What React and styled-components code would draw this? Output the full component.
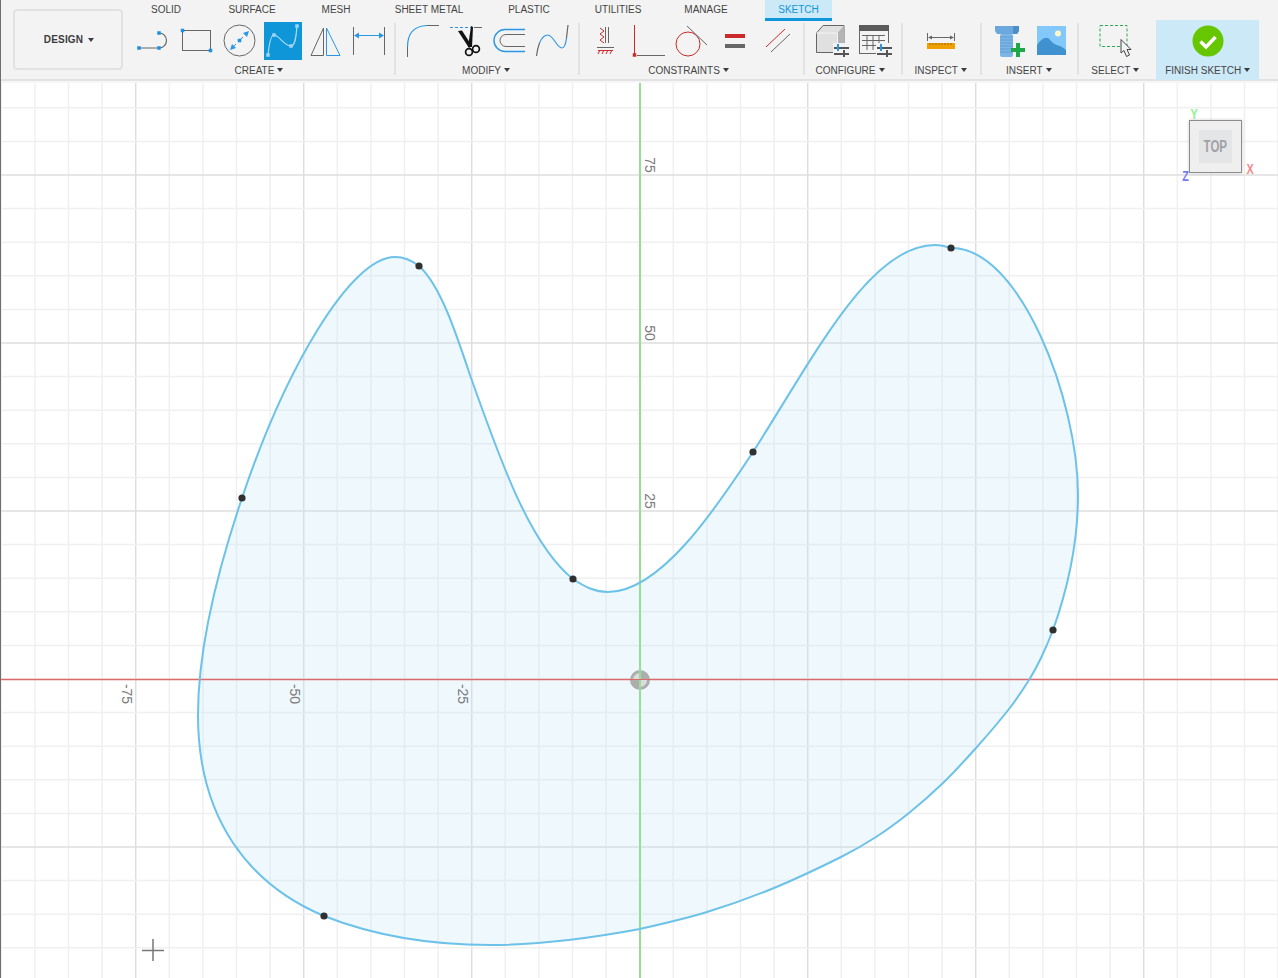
import React from "react";
import styled, { createGlobalStyle } from "styled-components";

const Global = createGlobalStyle`
  html, body { margin: 0; padding: 0; background: #fff; }
  body { font-family: "Liberation Sans", Arial, sans-serif; }
  * { box-sizing: border-box; }
`;

const Page = styled.div`
  position: relative;
  width: 1278px;
  height: 978px;
  overflow: hidden;
  background: #fff;
  &::after {
    content: "";
    position: absolute;
    left: 0;
    top: 0;
    bottom: 0;
    width: 1px;
    background: #6e6e6e;
  }
`;

const Toolbar = styled.header`
  display: flex;
  height: 81px;
  padding-left: 13px;
  background: #f3f3f3;
  border-bottom: 2px solid #e2e2e2;
`;

const DesignButton = styled.div`
  flex: none;
  display: flex;
  align-items: center;
  justify-content: center;
  gap: 5px;
  width: 110px;
  height: 61px;
  margin-top: 9px;
  margin-right: 12px;
  padding-left: 2px;
  border: 2px solid #e2e2e2;
  border-radius: 4px;
  font-size: 10px;
  font-weight: 700;
  letter-spacing: 0.2px;
  color: #3c3c3c;
`;

const Caret = styled.span`
  display: inline-block;
  width: 0;
  height: 0;
  margin-left: ${(p) => p.$gap ?? 3}px;
  vertical-align: 2px;
  border-left: 3px solid transparent;
  border-right: 3px solid transparent;
  border-top: 4px solid #3c3c3c;
`;

const Main = styled.div`
  display: flex;
  flex-direction: column;
  flex: 1;
  min-width: 0;
`;

const Tabs = styled.nav`
  display: flex;
  height: 20px;
  padding-left: 3px;
`;

const Tab = styled.div`
  flex: none;
  width: ${(p) => p.$w}px;
  height: 21px;
  display: flex;
  align-items: center;
  justify-content: center;
  white-space: nowrap;
  font-size: 10px;
  color: ${(p) => (p.$active ? "#0f96d8" : "#444")};
  background: ${(p) => (p.$active ? "#cce9f7" : "transparent")};
  border-bottom: 3px solid ${(p) => (p.$active ? "#0f96d8" : "transparent")};
  margin-left: ${(p) => p.$ml ?? 0}px;
`;

const Groups = styled.div`
  display: flex;
  height: 60px;
`;

const Group = styled.section`
  flex: none;
  display: flex;
  flex-direction: column;
  align-items: center;
  padding: 2px ${(p) => p.$r}px 0 ${(p) => p.$l}px;
`;

const IconRow = styled.div`
  display: flex;
  gap: ${(p) => p.$gap ?? 5}px;
  height: 38px;
`;

const Label = styled.div`
  display: flex;
  align-items: center;
  justify-content: center;
  height: 20px;
  padding-right: ${(p) => p.$pr ?? 5}px;
  white-space: nowrap;
  font-size: 10px;
  color: #444;
`;

const Separator = styled.div`
  flex: none;
  width: 2px;
  height: 52px;
  margin-top: 3px;
  background: #e2e2e2;
`;

const FinishGroup = styled.section`
  flex: none;
  display: flex;
  flex-direction: column;
  align-items: center;
  width: 103px;
  height: 60px;
  padding-top: 2px;
  background: #cce9f7;
`;

const IconBox = styled.svg`
  display: block;
  flex: none;
  width: 38px;
  height: 38px;
  background: ${(p) => (p.$active ? "#0f96d8" : "transparent")};
`;

const Icon = ({ x, active, children }) => (
  <IconBox viewBox={`${x} 22 38 38`} $active={active} fill="none">
    {children}
  </IconBox>
);

const Handle = ({ x, y, c = "#1e90e0", s = 3.5 }) => <rect x={x - s / 2} y={y - s / 2} width={s} height={s} fill={c} />;

const G = "#666";
const B = "#2a97e6";
const R = "#cc2a2a";

const Sliders = ({ x, y }) => (
  <g>
    <rect x={x} y={y} width="15" height="2" fill="#555" />
    <rect x={x} y={y + 6} width="15" height="2" fill="#555" />
    <rect x={x + 3} y={y - 3} width="2" height="7" fill={B} />
    <rect x={x + 9} y={y + 3} width="2" height="7" fill="#555" />
  </g>
);

const Canvas = styled.main`
  position: relative;
  height: 897px;
  border-top: 2px solid #f6f6f6;
`;

const Sketch = styled.svg`
  display: block;
  width: 1278px;
  height: 895px;
`;

const ViewCube = styled.div`
  position: absolute;
  left: 1189px;
  top: 37px;
  width: 53px;
  height: 53px;
  display: flex;
  align-items: center;
  justify-content: center;
  background: #efefef;
  border: 1px solid #8c8c8c;
  box-shadow: 0 0 3px rgba(0, 0, 0, 0.2);
`;

const CubeFace = styled.div`
  width: 33px;
  height: 33px;
  display: flex;
  align-items: center;
  justify-content: center;
  background: #e4e5e7;
  font-size: 16px;
  font-weight: 700;
  color: #a0a1a6;
`;

const FaceText = styled.span`
  display: block;
  transform: scaleX(0.72);
`;

const AxisLabel = styled.span`
  position: absolute;
  left: ${(p) => p.$x}px;
  top: ${(p) => p.$y}px;
  font-size: 15px;
  line-height: 15px;
  font-weight: 700;
  transform: scaleX(0.72);
  color: ${(p) => p.$c};
`;

const vLines = [];
for (let i = -19; i <= 19; i++) vLines.push({ x: 640 + i * 33.6, major: i % 5 === 0 && i !== 0 });
const hLines = [];
for (let i = -8; i <= 17; i++) hLines.push({ y: 679 - i * 33.6, major: i % 5 === 0 && i !== 0 });

// Smooth cubic segments through traced points; first and last entries only steer the tangents.
const smooth = (pts) => {
  let d = "";
  for (let i = 1; i < pts.length - 2; i++) {
    const [p0, p1, p2, p3] = [pts[i - 1], pts[i], pts[i + 1], pts[i + 2]];
    const c1x = p1[0] + (p2[0] - p0[0]) / 6;
    const c1y = p1[1] + (p2[1] - p0[1]) / 6;
    const c2x = p2[0] - (p3[0] - p1[0]) / 6;
    const c2y = p2[1] - (p3[1] - p1[1]) / 6;
    d += ` C${c1x.toFixed(1)} ${c1y.toFixed(1)} ${c2x.toFixed(1)} ${c2y.toFixed(1)} ${p2[0]} ${p2[1]}`;
  }
  return d;
};

const lowerRight = smooth([
  [597, 937], [640, 929], [707, 912], [774, 888], [841, 857], [876, 837], [909, 813], [943, 783], [976, 748], [1009, 709], [1029, 680], [1041, 658], [1053, 630], [1069, 585],
]);

const curve =
  "M419 266 C410 259 403 257 395 257 C350 257 285 370 242 498 C215 578 198 650 198 715 C198 820 250 885 324 916 C380 938 440 945 490 945 C545 945 597 937 640 929" +
  lowerRight +
  " C1069 585 1078 540 1078 495 C1078 400 1020 247 951 248 C945 246 940 245 935 245 C870 245 815 355 753 452 C715 510 660 592 608 592 C595 592 585 587 573 579 C530 545 500 460 470 375 C455 330 440 285 419 266 Z";

const points = [
  [419, 266], [242, 498], [324, 916], [1053, 630], [951, 248], [753, 452], [573, 579],
];

const dims = [
  { t: "75", x: 650, y: 165 },
  { t: "50", x: 650, y: 333 },
  { t: "25", x: 650, y: 501 },
  { t: "-75", x: 127, y: 694 },
  { t: "-50", x: 295, y: 694 },
  { t: "-25", x: 463, y: 694 },
];

export default function App() {
  return (
    <Page>
      <Global />
      <Toolbar>
        <DesignButton>DESIGN <Caret $gap={0} /></DesignButton>
        <Main>
          <Tabs>
            <Tab $w={56}>SOLID</Tab>
            <Tab $w={116}>SURFACE</Tab>
            <Tab $w={52}>MESH</Tab>
            <Tab $w={134}>SHEET METAL</Tab>
            <Tab $w={66}>PLASTIC</Tab>
            <Tab $w={112}>UTILITIES</Tab>
            <Tab $w={64}>MANAGE</Tab>
            <Tab $w={67} $active $ml={27}>SKETCH</Tab>
          </Tabs>
          <Groups>
            <Group $l={0} $r={6}>
              <IconRow>
                <Icon x={135}>
                  <path d="M139 48H159" stroke={G} />
                  <path d="M159 33A7.5 7.5 0 0 1 159 48" stroke={G} strokeWidth="1.2" />
                  <Handle x={139} y={48} /><Handle x={159} y={48} /><Handle x={159} y={33} />
                </Icon>
                <Icon x={178}>
                  <rect x="182.5" y="30.5" width="28" height="20" stroke={G} />
                  <Handle x={182.5} y={30.5} /><Handle x={210.5} y={50.5} />
                </Icon>
                <Icon x={221}>
                  <circle cx="239.5" cy="40.5" r="15.5" stroke={G} />
                  <path d="M231 49L248 32" stroke={B} strokeDasharray="7 3" />
                  <path d="M230 50l2-6 4 4zM249 31l-2 6-4-4z" fill={B} />
                  <Handle x={239.5} y={40.5} />
                </Icon>
                <Icon x={264} active>
                  <path d="M268 55C269 45 271 35 274 35C279 35 284 46 291 46C295 46 296 38 297 26" stroke="#a9dbf6" strokeWidth="1.2" />
                  <Handle x={268} y={55} c="#9fd6f5" /><Handle x={274} y={35} c="#9fd6f5" />
                  <Handle x={291} y={46} c="#9fd6f5" /><Handle x={297} y={26} c="#9fd6f5" />
                </Icon>
                <Icon x={307}>
                  <path d="M311 55.5L323.5 28V55.5Z" stroke={G} />
                  <path d="M326.5 28V55.5H340Z" stroke={B} />
                </Icon>
                <Icon x={350}>
                  <path d="M353.5 27V55M384.5 27V55" stroke={G} />
                  <path d="M357 35.5H381" stroke={B} />
                  <path d="M354 35.5l5-3v6zM384 35.5l-5-3v6z" fill={B} />
                </Icon>
              </IconRow>
              <Label>CREATE<Caret /></Label>
            </Group>
            <Separator />
            <Group $l={9} $r={6}>
              <IconRow>
                <Icon x={405}>
                  <path d="M407.5 47V57M427 25.5H439" stroke={G} />
                  <path d="M407.5 47C407.5 34 414 26 427 25.5" stroke={B} strokeWidth="1.2" />
                </Icon>
                <Icon x={448}>
                  <path d="M450 27.5H472" stroke={B} strokeDasharray="3 2" />
                  <path d="M474 27.5H482" stroke={G} />
                  <path d="M458 31L462 30.5L472 46L469 48Z" fill="#111" />
                  <path d="M471 26L473 27L472 47L468 47Z" fill="#111" />
                  <circle cx="469" cy="52" r="3.4" stroke="#111" strokeWidth="1.7" />
                  <circle cx="476" cy="49" r="3.4" stroke="#111" strokeWidth="1.7" />
                </Icon>
                <Icon x={491}>
                  <path d="M525 29.5H505A10.5 10.5 0 0 0 505 51.5H525" stroke={B} strokeWidth="1.4" />
                  <path d="M525 34.5H506A6 6 0 0 0 506 46.5H525" stroke={G} />
                </Icon>
                <Icon x={534}>
                  <path d="M536.5 56C537 52 538 47 539.5 43" stroke={G} strokeWidth="1.2" />
                  <path d="M539.5 43C542 37 545 35 548 35C553 35 557 48 562 48C565 48 566 42 566.5 38" stroke={B} strokeWidth="1.2" />
                  <path d="M566.5 38L568 25" stroke={G} strokeWidth="1.2" />
                </Icon>
              </IconRow>
              <Label>MODIFY<Caret /></Label>
            </Group>
            <Separator />
            <Group $l={6} $r={7}>
              <IconRow>
                <Icon x={586}>
                  <path d="M605.5 27V43M608.5 27V43M597 47.5H614" stroke={G} />
                  <path d="M600 28l4 3-4 3 4 3-4 3 4 3" stroke={R} />
                  <path d="M598 54l2-4M602 54l2-4M606 54l2-4M610 54l2-4M598 50.5H613" stroke={R} />
                </Icon>
                <Icon x={629}>
                  <path d="M634.5 25V55" stroke={R} />
                  <Handle x={634.5} y={55} c={R} />
                  <path d="M637 55.5H665" stroke={G} />
                </Icon>
                <Icon x={672}>
                  <circle cx="688" cy="44" r="12" stroke={R} />
                  <path d="M687 26L707 45" stroke={G} />
                </Icon>
                <Icon x={715}>
                  <rect x="725" y="34" width="20" height="4" fill={R} />
                  <rect x="725" y="44" width="20" height="4" fill={G} />
                </Icon>
                <Icon x={758}>
                  <path d="M766 47L785 29" stroke={R} />
                  <path d="M771 52L790 34" stroke={G} />
                </Icon>
              </IconRow>
              <Label>CONSTRAINTS<Caret /></Label>
            </Group>
            <Separator />
            <Group $l={7} $r={8}>
              <IconRow>
                <Icon x={812}>
                  <path d="M816.5 33L823 25.5H844V46L838 52.5H816.5Z" fill="#e0e0e0" stroke={G} />
                  <path d="M837.5 33V52L844 46V25.5Z" fill="#b4b4b4" />
                  <path d="M816.5 33H837.5V52" stroke="#f5f5f5" />
                  <rect x="833" y="43" width="16" height="13" fill="#f3f3f3" />
                  <Sliders x={834} y={47} />
                </Icon>
                <Icon x={855}>
                  <rect x="859.5" y="25.5" width="29" height="28" fill="#f3f3f3" stroke={G} />
                  <rect x="859" y="25" width="30" height="6" fill="#5a5a5a" />
                  <path d="M862 35.5H885M862 40.5H885M862 45.5H885M867 35V50M873 35V50M879 35V50" stroke={G} />
                  <rect x="876" y="43" width="16" height="13" fill="#f3f3f3" />
                  <Sliders x={877} y={47} />
                </Icon>
              </IconRow>
              <Label>CONFIGURE<Caret /></Label>
            </Group>
            <Separator />
            <Group $l={11.5} $r={8.5}>
              <IconRow>
                <Icon x={925}>
                  <path d="M928.5 33V41M955.5 33V41M930 37.5H954" stroke={G} />
                  <path d="M929 37.5l4-2v4zM955 37.5l-4-2v4z" fill={G} />
                  <rect x="928" y="43" width="28" height="6" fill="#f0a000" />
                  <path d="M931 43v2M934 43v2M937 43v2M940 43v2M943 43v2M946 43v2M949 43v2M952 43v2" stroke="#9a6a00" />
                </Icon>
              </IconRow>
              <Label>INSPECT<Caret /></Label>
            </Group>
            <Separator />
            <Group $l={9} $r={6}>
              <IconRow $gap={4}>
                <Icon x={991}>
                  <path d="M995 26H1019V31L1017 34H997L995 31Z" fill="#6aa8de" />
                  <path d="M1013 26H1019V31L1017 34H1013Z" fill="#4d8fc9" />
                  <rect x="1000" y="34" width="13" height="23" rx="2" fill="#7db5e4" />
                  <path d="M1000 37H1013M1000 40H1013M1000 43H1013M1000 46H1013M1000 49H1013M1000 52H1013" stroke="#5d9fd8" />
                  <path d="M1016 43H1020V48H1025V52H1020V57H1016V52H1011V48H1016Z" fill="#1fa84a" />
                </Icon>
                <Icon x={1033}>
                  <rect x="1037" y="26" width="29" height="29" fill="#83c8fa" />
                  <path d="M1037 45C1042 38 1047 35 1051 41C1055 46 1059 44 1066 50V55H1037Z" fill="#3f92cf" />
                  <circle cx="1058" cy="33.5" r="3" fill="#fff7c8" />
                </Icon>
              </IconRow>
              <Label>INSERT<Caret /></Label>
            </Group>
            <Separator />
            <Group $l={12} $r={12}>
              <IconRow>
                <Icon x={1099.5}>
                  <rect x="1100.5" y="25.5" width="27" height="21" stroke="#25ad58" strokeDasharray="3 2" />
                  <path d="M1121.5 39.5V53L1124.5 50.5L1127 56.5L1130 55L1127.5 49.5H1131.5Z" fill="#f3f3f3" stroke="#444" />
                </Icon>
              </IconRow>
              <Label>SELECT<Caret /></Label>
            </Group>
            <FinishGroup>
              <IconRow>
                <Icon x={1188}>
                  <circle cx="1207" cy="41" r="15.5" fill="#66c600" />
                  <path d="M1199.5 41.5L1205 47L1214.5 37" stroke="#fff" strokeWidth="3.4" />
                </Icon>
              </IconRow>
              <Label $pr={0}>FINISH SKETCH<Caret /></Label>
            </FinishGroup>
          </Groups>
        </Main>
      </Toolbar>
      <Canvas>
        <Sketch viewBox="0 83 1278 895" fill="none">
          {vLines.map((l) => (
            <line key={l.x} x1={l.x - 0.3} x2={l.x - 0.3} y1="83" y2="978" stroke={l.major ? "#dedede" : "#f0f0f0"} strokeWidth="1.5" />
          ))}
          {hLines.map((l) => (
            <line key={l.y} y1={l.y} y2={l.y} x1="0" x2="1278" stroke={l.major ? "#dedede" : "#f0f0f0"} strokeWidth="1.5" />
          ))}
          <path d={curve} fill="rgba(190,225,248,0.24)" />
          <line x1="0" x2="1278" y1="679.5" y2="679.5" stroke="#e8a8a8" strokeWidth="3" strokeOpacity="0.45" />
          <line x1="0" x2="1278" y1="679.5" y2="679.5" stroke="#dc6a6a" strokeWidth="1.2" />
          <line x1="640" x2="640" y1="83" y2="978" stroke="#93df97" strokeWidth="2" />
          <path d={curve} stroke="#6cc2e8" strokeWidth="2" />
          {points.map(([x, y]) => (
            <circle key={x} cx={x} cy={y} r="3.6" fill="#303030" />
          ))}
          <circle cx="640" cy="680" r="10" fill="#adadad" />
          <path d="M640 680V673A7 7 0 0 0 633 680ZM640 680V687A7 7 0 0 0 647 680Z" fill="#dcdcdc" />
          <path d="M640 670V690" stroke="#93df97" strokeWidth="2" />
          <path d="M630 679.5H650" stroke="#dc6a6a" />
          {dims.map((d) => (
            <text key={d.t} x={d.x} y={d.y} transform={`rotate(90 ${d.x} ${d.y})`} textAnchor="middle" dominantBaseline="central" fontFamily="'Liberation Sans', sans-serif" fontSize="14" fill="#7a7a7a">
              {d.t}
            </text>
          ))}
          <path d="M142 950.5H164M153 939V961" stroke="#777" strokeWidth="1.5" />
        </Sketch>
        <AxisLabel $x={1189} $y={23} $c="#90f090">Y</AxisLabel>
        <AxisLabel $x={1245} $y={78} $c="#f58a8a">X</AxisLabel>
        <AxisLabel $x={1181} $y={85} $c="#7a7af5">Z</AxisLabel>
        <ViewCube>
          <CubeFace><FaceText>TOP</FaceText></CubeFace>
        </ViewCube>
      </Canvas>
    </Page>
  );
}
